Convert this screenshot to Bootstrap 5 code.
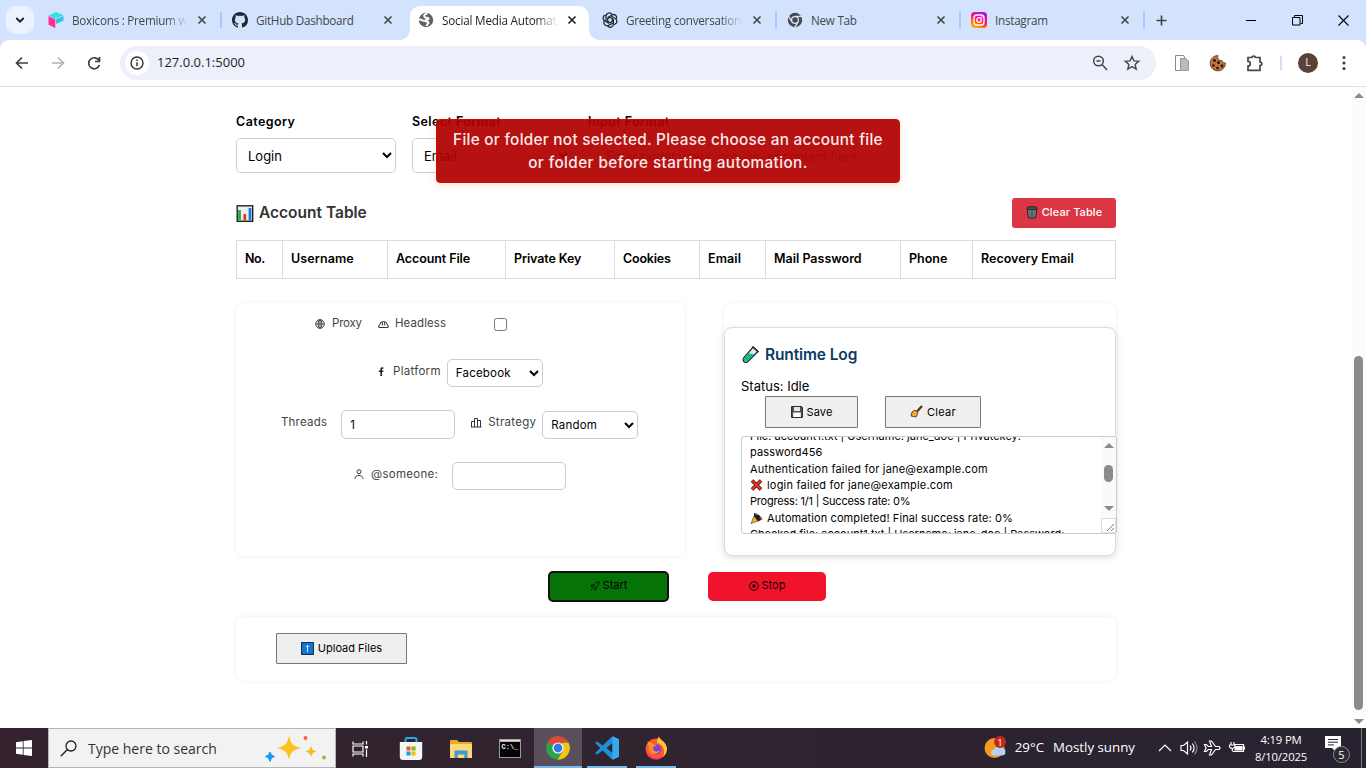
<!DOCTYPE html>
<html lang="en">
<head>
<meta charset="utf-8">
<title>Social Media Automation</title>
<link href="https://cdn.jsdelivr.net/npm/bootstrap@5.3.0/dist/css/bootstrap.min.css" rel="stylesheet">
<style>
html,body{height:768px;overflow:hidden}
body{width:1366px;font-family:Inter,"Liberation Sans",sans-serif;font-size:13px;line-height:1.5;color:#000;background:#fff}
svg{display:block;flex:none}
.ui{font-family:"Open Sans","Noto Sans",sans-serif}
/* letter spacing steps */
.ls-n2{letter-spacing:-.2px}.ls-n1{letter-spacing:-.1px}.ls-1{letter-spacing:.1px}.ls-2{letter-spacing:.2px}.ls-3{letter-spacing:.29px}.ls-4{letter-spacing:.4px}
/* tab strip */
.strip{height:40px;background:#d3e3fd;font-size:11.7px;letter-spacing:-.26px;color:#44474a}
.tabdrop{width:28px;height:28px;border-radius:10px;background:#ecf2fe;margin:0 4px 0 6px}
.btab{width:184px;height:40px;padding:0 13px 0 10px;border-right:2px solid transparent;position:relative}
.btab svg.fav{width:16px;height:16px;margin-right:8px}
.btab .ttl{width:118px;white-space:nowrap;padding-top:1px}
.btab .fade-end{-webkit-mask-image:linear-gradient(90deg,#000 80%,transparent 98%);mask-image:linear-gradient(90deg,#000 80%,transparent 98%)}
.btab .cls{margin-left:auto}
.sepbar{width:2px;height:16px;background:#a8c7fa;position:absolute;right:-2px;top:12px}
.btab.w185{width:185px}.btab.w186{width:186px}
.btab.on{color:#1f1f1f}
.btab.on::before{content:"";position:absolute;left:2px;top:6px;width:179px;height:34px;background:#fff;border-radius:10px 10px 0 0}
.btab.on>*{position:relative}
.btab.on .foot{position:absolute;bottom:0;width:10px;height:10px}
.foot.l{left:-8px;background:radial-gradient(circle at 0 0,transparent 9.5px,#fff 10px)}
.foot.r{left:181px;background:radial-gradient(circle at 100% 0,transparent 9.5px,#fff 10px)}
.newtab{margin-left:11px;margin-right:auto}
.wbtn{width:46px;height:40px}
/* toolbar */
.tbwrap{background:#d3e3fd;height:47px}
.tbar{height:47px;background:#fff;border-radius:9px 9px 0 0;border-bottom:1px solid #dfe1e5;padding-bottom:1px}
.omni{width:1036px;height:34px;border-radius:17px;background:#ecf0fa;padding:0 15px 0 5px;font-size:13px;color:#1f1f1f}
.site{width:24px;height:24px;border-radius:50%;background:#fff}
.av{width:20px;height:20px;border-radius:50%;background:#5d4037;color:#eee;font-size:11px;margin-left:2px}
.kebab{margin-right:18px}
/* page */
.pagebox{height:641px;width:1351px;padding:24px 235px 0 236px;position:relative}
.sbar{width:15px;height:641px;background:#fcfcfc;padding:6px 0 4px}
.sbar .thumb{width:9px;height:354px;border-radius:5px;background:#8b8b8b;margin-top:258px}
.flip{transform:scaleY(-1)}
.lab{font-weight:600;height:25px;padding-top:2px;margin-bottom:2px;white-space:nowrap;font-size:12.5px;letter-spacing:.42px}
.f160{width:160px;margin-right:16px}
.ctl{display:block;border:1px solid #ccc;border-radius:5px;background:#fff;color:#000;outline:0}
.ctl.big{width:160px;height:35px;font-size:13px;padding:0 4px 0 7px}
.ctl.sm2{width:96px;height:28px;font-size:11.5px;padding:0 0 0 4px;margin-left:6px;letter-spacing:.2px}
.ctl.inp{width:114px;height:29px;font-size:11.5px;padding:0 8px;margin-left:14px}
.ctl.inp.low{height:28px}
.ctl.tgt{width:282px;height:37px;font-size:12.5px;padding:0 8px;margin-left:9px}
.ctl.tgt::placeholder{color:#757575}
.toastbox{position:absolute;left:436px;top:32px;width:464px;height:64px;background:rgba(176,0,0,.93);border:1px solid #cf0808;border-radius:4px;color:#fbe9e9;text-align:center;font-size:15.3px;line-height:23px;padding-top:8px;font-weight:500;box-shadow:0 3px 10px rgba(255,150,60,.2);white-space:nowrap}
.acc-row{margin-top:23px}
.h-acc{font-size:15.5px;font-weight:600;color:#333}
.btn-clr{width:104px;height:30px;border-radius:3px;background:#dc3545;color:#fff;font-size:11px;font-weight:500;border:0;padding-bottom:2px}
.grid-t{table-layout:fixed;width:880px;border-collapse:collapse;margin:12px 0 0;font-size:12.5px}
.grid-t th{border:1px solid #ddd;height:38px;padding:0 0 0 8px;font-weight:600;white-space:nowrap}
.grid-t th:first-child{letter-spacing:-.4px}
.panels{margin-top:24px}
.panelx{border-radius:8px;background:#fff;box-shadow:0 0 5px rgba(0,0,0,.07)}
.opt{width:449px;height:253px;color:#444;font-size:11.5px}
.opt .lb{margin-bottom:3px;white-space:nowrap}
.r1{height:42px;padding-left:79px}.r1 .lb{margin-bottom:1px}
.r1 input{width:13px;height:13px;margin:1px 0 0 48px}
.r2{height:56px;padding-left:141px}
.r3{height:47px;padding-left:45px}
.r4{height:56px;padding-left:118px}
.g6{margin-left:6px}.g7{margin-left:7px}
.logwrap{width:392px;height:253px;padding-top:24px}
.logcard{height:229px;border:1px solid #ddd;border-radius:8px;padding:15px 0 0 16px;box-shadow:0 2px 8px rgba(0,0,0,.1);background:#fff}
.h-log{font-size:15.5px;font-weight:600;color:#0b3a66;letter-spacing:-.12px;gap:5px}
.stat{margin-top:11px;height:19px}
.logbtns{margin-left:24px;gap:27px}
.gbtn{border:1px solid #767676;background:#efefef;font-size:11px;border-radius:1px;color:#000;height:32px;width:93px;padding-bottom:2px}
.gbtn.w96{width:96px}.gbtn.w131{width:131px;height:31px}
.logarea{width:376px;height:98px;border:1px solid #ccc;border-radius:3px;margin-top:8px;overflow:hidden;background:#fff}
.logtxt{font-size:11px;line-height:16.4px;padding-left:8px;margin-top:-9.500px;width:359px;white-space:nowrap}
.logtxt svg{display:inline-block;vertical-align:-2px;margin-right:4px}
.lsb{width:15px;background:#fafafa;padding-top:6px}
.lsb .thumb{width:9px;height:17px;border-radius:4.5px;background:#8b8b8b;margin:17px 0 24px}
.lsb .grip{width:15px;height:15px;background:#fff;border:1px solid #ddd}
.runrow{margin:15px 0 15px 312px;height:31px;gap:39px}
.runb{font-size:11px;border:0;border-radius:5px;color:#000;padding-bottom:3px;gap:3px}
.runb.start{width:121px;height:31px;background:#067306;border:2px solid #101010}
.runb.stop{width:118px;height:29px;background:#f0132b;color:#1a0204}
.upl{height:64px;padding:16px 40px}
/* taskbar */
.task{height:40px;background:linear-gradient(90deg,#33222e,#30242f 45%,#282230);color:#fff}
.startb{width:48px}
.srch{width:288px;height:40px;background:#f2f2f2;border:1px solid #b5b5b5;color:#333;font-size:14px;padding:0 8px 0 11px}
.srch span{margin-left:11px;padding-top:1px}
.ticon{width:49px;height:40px;padding-top:1px}
.ticon.w51{width:51px}.ticon.w48{width:49px}
.ticon.act{width:48px;background:#594f5a;border-bottom:2px solid #76b9ed}
.ticon.run{width:40px;border-bottom:2px solid #76b9ed;margin-left:5px}
.ticon.run+.run{margin-left:9px}
.tray{font-size:13.3px}
.temp{margin-left:9px}.cond{margin-left:9px}
.trayic{margin-left:22px}
.clock{font-size:11.3px;line-height:17px;width:62px;text-align:center;white-space:nowrap;margin-left:5px;letter-spacing:-.15px}
.notif{width:25px;height:24px;position:relative;margin-left:13px}
.bdg{position:absolute;left:8px;top:10px;width:17px;height:17px;border-radius:50%;background:#2b2b2f;border:1px solid #8b8b8f;font-size:11px;line-height:15px;text-align:center}
.peek{width:1px;height:40px;background:#777;margin:0 4px 0 11px}
</style>
</head>
<body>
<svg width="0" height="0" class="position-absolute">
<defs>
<symbol id="x" viewBox="0 0 10 10"><path d="M1.5 1.5l7 7M8.5 1.5l-7 7" stroke="currentColor" stroke-width="1.6" fill="none"/></symbol>
<symbol id="up" viewBox="0 0 10 5"><path d="M0 5L5 0l5 5z" fill="#8b8b8b"/></symbol>
</defs></svg>

<div class="strip ui d-flex align-items-center">
  <div class="tabdrop d-flex align-items-center justify-content-center"><svg width="10" height="8" viewBox="0 0 10 8"><path d="M1.3 2l3.700 3.600L8.700 2" fill="none" stroke="#1f1f1f" stroke-width="1.900"/></svg></div>
  <div class="btab d-flex align-items-center"><svg class="fav" viewBox="0 0 16 16"><path d="M8 0l7.500 3.200L7.500 6.700.5 3.700z" fill="#2ee0ea"/><path d="M.5 4.300L7.300 7.200V16L.5 12.800z" fill="#ff2f92"/><path d="M8 7.200l7.500-3.200v4.500L8 12z" fill="#28c9dd"/></svg><div class="ttl fade-end">Boxicons : Premium w</div><svg class="cls" width="10" height="10"><use href="#x"/></svg><i class="sepbar"></i></div>
  <div class="btab w186 d-flex align-items-center"><svg class="fav" viewBox="0 0 16 16"><path fill="#24292f" d="M8 0C3.580 0 0 3.580 0 8c0 3.540 2.290 6.530 5.470 7.590.4.070.55-.17.55-.38 0-.19-.01-.82-.01-1.490-2.010.37-2.530-.49-2.690-.94-.09-.23-.48-.94-.82-1.130-.28-.15-.68-.52-.01-.53.630-.01 1.080.58 1.230.82.720 1.210 1.870.87 2.330.66.070-.52.28-.87.51-1.070-1.780-.2-3.640-.89-3.640-3.950 0-.87.31-1.590.82-2.150-.08-.2-.36-1.020.08-2.120 0 0 .67-.21 2.200.82.640-.18 1.320-.27 2-.27s1.360.090 2 .27c1.530-1.040 2.200-.82 2.200-.82.440 1.100.16 1.920.080 2.120.51.560.82 1.270.82 2.150 0 3.070-1.870 3.750-3.650 3.950.29.25.54.73.54 1.480 0 1.070-.01 1.930-.01 2.200 0 .21.15.46.55.38A8.010 8.010 0 0016 8c0-4.420-3.580-8-8-8z"/></svg><div class="ttl">GitHub Dashboard</div><svg class="cls" width="10" height="10"><use href="#x"/></svg></div>
  <div class="btab on d-flex align-items-center"><i class="foot l"></i><i class="foot r"></i><svg class="fav" viewBox="0 0 16 16"><circle cx="8" cy="8" r="7.200" fill="#5f6368"/><path d="M9.500 1.500C6.500 2 5.500 3.500 6.500 5s3.500 0 4 1.500-3.500 1-3.500 2.200 3 .3 3.500 1.800-1.700 1.500-2 3.500M1 7.500c2 0 4 .5 4.500 2" fill="none" stroke="#fff" stroke-width="1.900"/></svg><div class="ttl fade-end ls-n2">Social Media Automat</div><svg class="cls" width="10" height="10"><use href="#x"/></svg></div>
  <div class="btab w185 d-flex align-items-center"><svg class="fav" viewBox="0 0 16 16"><g fill="none" stroke="#222b33" stroke-width="1.300"><g id="pt"><path d="M4 9V4.200a3.300 3.300 0 016-1.800M5.500 5.500L10 3a3 3 0 014.300 3.800"/></g><use href="#pt" transform="rotate(120 8 8)"/><use href="#pt" transform="rotate(240 8 8)"/><path d="M8 5.300l2.300 1.400v2.700L8 10.700 5.700 9.400V6.700z"/></g></svg><div class="ttl fade-end">Greeting conversation</div><svg class="cls" width="10" height="10"><use href="#x"/></svg><i class="sepbar"></i></div>
  <div class="btab d-flex align-items-center"><svg class="fav" viewBox="0 0 16 16"><circle cx="8" cy="8" r="7.200" fill="#474b4f"/><circle cx="8" cy="8" r="3.400" fill="none" stroke="#d3e3fd" stroke-width="1.300"/><path d="M8 4.400h6.500M4.900 9.800L1.500 4M11.100 9.800l-3.300 5.600" stroke="#d3e3fd" stroke-width="1.300"/></svg><div class="ttl">New Tab</div><svg class="cls" width="10" height="10"><use href="#x"/></svg><i class="sepbar"></i></div>
  <div class="btab d-flex align-items-center"><svg class="fav" viewBox="0 0 16 16"><defs><linearGradient id="ig" x1="0.200" y1="1" x2="0.700" y2="0"><stop offset="0" stop-color="#ffc000"/><stop offset=".35" stop-color="#ff5a1f"/><stop offset=".6" stop-color="#ff0a8c"/><stop offset="1" stop-color="#b010f0"/></linearGradient></defs><rect width="16" height="16" rx="3.500" fill="url(#ig)"/><rect x="3" y="3" width="10" height="10" rx="3" fill="none" stroke="#fff" stroke-width="1.300"/><circle cx="8" cy="8" r="2.300" fill="none" stroke="#fff" stroke-width="1.300"/><circle cx="10.900" cy="5.100" r=".8" fill="#fff"/></svg><div class="ttl">Instagram</div><svg class="cls" width="10" height="10"><use href="#x"/></svg><i class="sepbar"></i></div>
  <svg width="11" height="11" viewBox="0 0 11 11" class="newtab"><path d="M5.500 .5v10M.5 5.500h10" stroke="#444" stroke-width="1.700"/></svg>
  <div class="wbtn d-flex align-items-center justify-content-center"><svg width="11" height="11"><path d="M0 5.500h10" stroke="#000"/></svg></div>
  <div class="wbtn d-flex align-items-center justify-content-center"><svg width="11" height="11"><path d="M.5 2.500h7.500v7.500h-7.500zM2.500 2.500v-2h8v8h-2" fill="none" stroke="#000"/></svg></div>
  <div class="wbtn d-flex align-items-center justify-content-center"><svg width="11" height="11"><path d="M.5.5l10 10M10.500.5l-10 10" stroke="#000" stroke-width="1.100"/></svg></div>
</div>

<div class="tbwrap ui"><div class="tbar d-flex align-items-center">
  <svg width="120" height="46" viewBox="0 40 120 46" fill="none" stroke-width="1.700"><path d="M28 63H17M22 57.500L16.500 63l5.500 5.500" stroke="#3c4043"/><path d="M52 63h11M58 57.500l5.500 5.500-5.500 5.500" stroke="#b0b3b6"/><path d="M99.200 61a5.500 5.500 0 10.200 4M99.500 57v4.500H95" stroke="#3c4043"/></svg>
  <div class="omni d-flex align-items-center">
    <div class="site d-flex align-items-center justify-content-center"><svg width="14" height="14" viewBox="0 0 14 14"><circle cx="7" cy="7" r="6" fill="none" stroke="#333" stroke-width="1.400"/><path d="M7 6.200v4M7 3.600v1.400" stroke="#333" stroke-width="1.500"/></svg></div>
    <span class="ms-2">127.0.0.1:5000</span>
    <svg class="ms-auto" width="50" height="18" viewBox="0 0 50 18" fill="none" stroke="#444746" stroke-width="1.500"><circle cx="7.500" cy="7" r="4.800"/><path d="M11 10.500l5 5.500M5.500 7h4"/><path d="M41 2.500l1.900 4.400 4.800.4-3.600 3.200 1.100 4.600-4.200-2.500-4.200 2.500 1.100-4.600-3.600-3.200 4.800-.4z" stroke-width="1.400"/></svg>
  </div>
  <svg width="140" height="46" viewBox="1156 40 140 46"><path d="M1175.500 55.500v15h5V59h5l-2-3.500z" fill="#fff" stroke="#888"/><path d="M1180.500 58.500h5.500l2.500 2.500v9.500h-8z" fill="#bbb" stroke="#999"/><path d="M1218 55.500a7.700 7.700 0 107.500 7.500 3 3 0 01-3.500-2.500 3.500 3.500 0 01-4-5z" fill="#bf7248" stroke="#5e2f18" stroke-width=".8"/><g fill="#2b1108"><circle cx="1214.500" cy="60.500" r="1.400"/><circle cx="1218.500" cy="62.500" r="1.500"/><circle cx="1213.500" cy="65.500" r="1.300"/><circle cx="1222" cy="66" r="1.400"/><circle cx="1217.500" cy="68" r="1.300"/></g><path d="M1248 57.500h3.800a1.900 1.900 0 013.700 0h4.500v4.500a1.800 1.800 0 010 3.600v4.700h-12v-4.300a2.300 2.300 0 000-4.600z" fill="none" stroke="#444746" stroke-width="1.700"/><path d="M1281 55.500v15" stroke="#c5d8fb" stroke-width="1.600"/></svg>
  <div class="av d-flex align-items-center justify-content-center me-auto">L</div>
  <svg width="6" height="16" class="kebab" fill="#444746"><circle cx="2" cy="2.500" r="1.600"/><circle cx="2" cy="8" r="1.600"/><circle cx="2" cy="13.500" r="1.600"/></svg>
</div></div>

<div class="d-flex">
<main class="pagebox">
  <div class="d-flex">
    <div class="f160"><div class="lab">Category</div><select class="ctl big"><option>Login</option></select></div>
    <div class="f160"><div class="lab">Select Format</div><select class="ctl big"><option>Email</option></select></div>
    <div><div class="lab">Input Format</div><input class="ctl tgt" placeholder="Enter target users, groups, or content here"></div>
  </div>
  <div class="acc-row d-flex align-items-center justify-content-between">
    <div class="h-acc d-flex align-items-center"><svg class="me-1" width="19" height="17" viewBox="0 0 19 17"><rect x="1.200" y=".8" width="15.500" height="15.500" fill="#eee" stroke="#222" stroke-width="1.400"/><path d="M3.500 5v10.500" stroke="#20b040" stroke-width="2.800"/><path d="M8.800 9v6.500" stroke="#e03a2a" stroke-width="2.800"/><path d="M14 3v12.500" stroke="#1678d8" stroke-width="2.800"/></svg><span>Account Table</span></div>
    <button class="btn-clr d-flex align-items-center justify-content-center"><svg class="me-1" width="12" height="13" viewBox="0 0 12 13"><path d="M1 2.500h10L9.500 12h-7z" fill="#6f7f80" stroke="#222"/><ellipse cx="6" cy="2.200" rx="5" ry="1.600" fill="#4a5556" stroke="#222"/><path d="M3 5l5.500 6M9 5l-5.500 6M6 4v8" stroke="#445" stroke-width=".7"/></svg><span class="ls-1">Clear Table</span></button>
  </div>
  <table class="grid-t"><colgroup><col width="46"><col width="105"><col width="118"><col width="109"><col width="85"><col width="66"><col width="135"><col width="72"><col></colgroup><tr><th>No.</th><th class="ls-1">Username</th><th class="ls-n1">Account File</th><th class="ls-n1">Private Key</th><th class="ls-n2">Cookies</th><th class="ls-1">Email</th><th>Mail Password</th><th>Phone</th><th>Recovery Email</th></tr></table>
  <div class="panels d-flex justify-content-between">
    <section class="panelx opt">
      <div class="r1 d-flex align-items-center">
        <svg width="10" height="10" viewBox="0 0 10 10"><path d="M1 3.500A4.300 4.300 0 019 3.500" fill="#cfe0f0"/><g fill="none" stroke="#333" stroke-width=".9"><circle cx="5" cy="5" r="4.300"/><ellipse cx="5" cy="5" rx="1.900" ry="4.300"/><path d="M.7 5h8.600M5 .7v8.600"/></g></svg><span class="lb g7 ls-n2">Proxy</span>
        <svg width="11" height="10" viewBox="0 0 11 10" class="ms-3"><path d="M.8 8.500h9.400V6.500h-.7a4 4 0 00-8 0H.8zM4.300 6.500V3M6.700 6.500V3" fill="none" stroke="#333"/></svg><span class="lb g6 ls-1">Headless</span>
        <input type="checkbox">
      </div>
      <div class="r2 d-flex align-items-center">
        <svg width="8" height="9" viewBox="0 0 8 9" class="mb-1"><path d="M3.400 9V5H1.800V3.500h1.600V2.300C3.400.8 4.300.2 6.400.4v1.300C5.400 1.600 5 1.800 5 2.500v1h1.500L6.200 5H5v4z" fill="#222"/></svg><span class="lb ms-2 ls-3">Platform</span>
        <select class="ctl sm2"><option>Facebook</option></select>
      </div>
      <div class="r3 d-flex align-items-center">
        <span class="lb ls-2">Threads</span><input class="ctl inp" value="1">
        <svg width="11" height="11" viewBox="0 0 11 11" class="mb-1 ms-3"><path d="M.5 10V4.500h3V10M3.500 10V1.500h3V10M6.500 10V3.500h3V10M0 10h10.500" fill="none" stroke="#333"/></svg><span class="lb g6 ls-3">Strategy</span>
        <select class="ctl sm2"><option>Random</option></select>
      </div>
      <div class="r4 d-flex align-items-center">
        <svg width="10" height="10" viewBox="0 0 10 10" class="mb-1"><circle cx="5" cy="2.700" r="2" fill="none" stroke="#333"/><path d="M1 9.800c0-4.500 8-4.500 8 0" fill="none" stroke="#333"/></svg><span class="lb g7 ls-3">@someone:</span><input class="ctl inp low">
      </div>
    </section>
    <section class="panelx logwrap"><div class="logcard">
      <div class="h-log d-flex align-items-center"><svg width="19" height="19" viewBox="0 0 19 19"><path d="M12 2l5 4.500L6.500 17c-3 1.500-5.500-1.500-4-4z" fill="#cfe8f5" stroke="#222" stroke-width="1.200"/><path d="M7 8.200l6 1L6.200 16.300c-2 1-4-1-3-3z" fill="#12b886"/><path d="M11.500 1.500l6 5.500" stroke="#222" stroke-width="1.500"/></svg><span>Runtime Log</span></div>
      <div class="stat">Status: Idle</div>
      <div class="logbtns d-flex">
        <button class="gbtn d-flex align-items-center justify-content-center"><svg class="me-1" width="12" height="12" viewBox="0 0 12 12"><path d="M.6.600h10l.8.8v10H.6z" fill="#5a4a58" stroke="#222"/><rect x="3" y="1" width="6" height="4" fill="#e6e6e6"/><rect x="2.200" y="6.500" width="7.600" height="4.500" fill="#fff"/></svg><span class="ls-1">Save</span></button>
        <button class="gbtn w96 d-flex align-items-center justify-content-center"><svg class="me-1" width="13" height="13" viewBox="0 0 13 13"><path d="M12 1L7 6.500" stroke="#5a2f18" stroke-width="2.200"/><path d="M5 5l3 3-2 4-5-1 1-4z" fill="#f4a838" stroke="#4a2a10" stroke-width=".8"/></svg><span class="ls-3">Clear</span></button>
      </div>
      <div class="logarea d-flex">
        <div class="logtxt"><div>File: account1.txt | Username: jane_doe | Privatekey:</div><div class="ls-1">password456</div><div class="ls-2">Authentication failed for jane@example.com</div><div><svg width="13" height="12" viewBox="0 0 13 12"><path d="M2 1.500l9 9M11 1.500l-9 9" stroke="#3a1010" stroke-width="3.600"/><path d="M2 1.500l9 9M11 1.500l-9 9" stroke="#e5341f" stroke-width="2.200"/></svg><span class="ls-2">login failed for jane@example.com</span></div><div class="ls-n2">Progress: 1/1 | Success rate: 0%</div><div><svg width="13" height="12" viewBox="0 0 13 12"><path d="M4 1l5 2 3.500 4-4 2.500L4 6z" fill="#222"/><path d="M4 4l4 5-7 2.500z" fill="#f4b52e" stroke="#4a2a10" stroke-width=".6"/><circle cx="6" cy="2" r="1" fill="#2b8be0"/><circle cx="10.500" cy="6.500" r="1" fill="#d33"/></svg><span class="ls-1">Automation completed! Final success rate: 0%</span></div><div>Checked file: account1.txt | Username: jane_doe | Password:</div></div>
        <div class="lsb d-flex flex-column align-items-center"><svg width="10" height="5"><use href="#up"/></svg><div class="thumb"></div><svg class="flip" width="10" height="5"><use href="#up"/></svg><div class="grip mt-auto"><svg width="13" height="13"><path d="M5 12l7-7M9 12l3-3" stroke="#777"/></svg></div></div>
      </div>
    </div></section>
  </div>
  <div class="runrow d-flex align-items-center">
    <button class="runb start d-flex align-items-center justify-content-center"><svg width="10" height="10" viewBox="0 0 10 10"><path d="M3.500 6.500C3 4 6 .7 9.300.7 9.300 4 6 7 3.500 6.500zM4 3.500L1 4.500l1 2M6.500 6L5.500 9l-2-1M2.500 7.500L.8 9.200" fill="none" stroke="#021a02"/></svg><span>Start</span></button>
    <button class="runb stop d-flex align-items-center justify-content-center"><svg width="10" height="10" viewBox="0 0 10 10"><circle cx="5" cy="5" r="4.300" fill="none" stroke="#1a0204"/><rect x="3.500" y="3.500" width="3" height="3" fill="#1a0204"/></svg><span>Stop</span></button>
  </div>
  <div class="panelx upl"><button class="gbtn w131 d-flex align-items-center justify-content-center"><svg class="me-1" width="13" height="13" viewBox="0 0 13 13"><rect x=".6" y=".6" width="11.800" height="11.800" fill="#0d7ad8" stroke="#123"/><path d="M6.500 10V3.500M4.800 5l1.700-1.700L8.200 5" fill="none" stroke="#d8ecff"/></svg><span>Upload Files</span></button></div>
  <div class="toastbox"><span class="ls-3">File or folder not selected. Please choose an account file</span><br><span class="ls-4">or folder before starting automation.</span></div>
</main>
<div class="sbar d-flex flex-column align-items-center"><svg width="10" height="5"><use href="#up"/></svg><div class="thumb"></div><svg class="mt-auto flip" width="10" height="5"><use href="#up"/></svg></div>
</div>

<footer class="task ui d-flex">
  <div class="startb d-flex align-items-center justify-content-center"><svg width="16" height="16" viewBox="0 0 16 16" fill="#fff"><path d="M0 2.200L6.800 1.200V7.600H0zM7.600 1.100L16 0v7.600H7.600zM0 8.400h6.800v6.400L0 13.800zM7.600 8.400H16V16l-8.400-1.100z"/></svg></div>
  <div class="srch d-flex align-items-center"><svg width="17" height="17" viewBox="0 0 17 17"><circle cx="11" cy="6" r="5" fill="none" stroke="#222" stroke-width="1.300"/><path d="M7.400 9.600L.8 16.200" stroke="#222" stroke-width="1.400"/></svg><span>Type here to search</span>
    <svg class="ms-auto" width="62" height="28" viewBox="264 734 62 28"><path d="M288 735.500c2 9 4 10.500 12 12.500-8 2-10 3.500-12 11.500-2-8-4-9.500-12-11.500 8-2 10-3.500 12-12.500z" fill="#fbc11e"/><path d="M310 745.500c1 4 2 5 5.500 6-3.500 1-4.500 2-5.500 5.500-1-3.500-2-4.500-5.500-5.500 3.500-1 4.500-2 5.500-6z" fill="#fbb81e"/><path d="M269 752l1.500 3 3 1.500-3 1.500-1.500 3.500-1.500-3.500-3-1.500 3-1.500z" fill="#12a0ec" stroke="#12a0ec"/><circle cx="304.500" cy="738" r="2" fill="#f4682c"/><circle cx="323" cy="757.500" r="2" fill="#86c440"/></svg></div>
  <div class="ticon d-flex align-items-center justify-content-center"><svg width="17" height="16" viewBox="0 0 17 16" fill="none" stroke="#fff" stroke-width="1.200"><path d="M1 .5V3h10V.5M1 15.500V13h10v2.500M1 5h10v6H1zM14.500 0v3.500M14.500 8.500V16"/><path d="M13 5h3v2.500h-3z" fill="#fff" stroke="none"/></svg></div>
  <div class="ticon w51 d-flex align-items-center justify-content-center"><svg width="24" height="24" viewBox="0 0 24 24"><path d="M6.500 6V2.500a1.500 1.500 0 011.500-1.500h8a1.500 1.500 0 011.500 1.500V6" fill="none" stroke="#28a8ea" stroke-width="2"/><path d="M.8 5h22.400v15a3 3 0 01-3 3H3.800a3 3 0 01-3-3z" fill="#f5f5f5"/><path d="M7.500 9.500h4v4h-4z" fill="#f25022"/><path d="M12.500 9.500h4v4h-4z" fill="#7fba00"/><path d="M7.500 14.500h4v4h-4z" fill="#00a4ef"/><path d="M12.500 14.500h4v4h-4z" fill="#ffb900"/></svg></div>
  <div class="ticon w48 d-flex align-items-center justify-content-center"><svg width="22" height="18" viewBox="0 0 22 18"><path d="M0 1a1 1 0 011-1h6l2 2h12a1 1 0 011 1v4H0z" fill="#e8a92c"/><path d="M0 4h22v14H0z" fill="#fcd978"/><path d="M4.500 18v-6.500a1 1 0 011-1h11a1 1 0 011 1V18h-3.200v-3.500H7.700V18z" fill="#3f97dc"/></svg></div>
  <div class="ticon d-flex align-items-center justify-content-center"><svg width="22" height="19" viewBox="0 0 22 19"><rect x=".5" y=".5" width="21" height="18" fill="#050505" stroke="#999"/><path d="M1 1.800h20" stroke="#ddd" stroke-width="2"/><text x="2.500" y="9.500" font-family="Liberation Mono" font-size="7" font-weight="700" fill="#eee">C:\_</text></svg></div>
  <div class="ticon act d-flex align-items-center justify-content-center"><svg width="24" height="24" viewBox="0 0 24 24"><circle cx="12" cy="12" r="11.800" fill="#2ba24c"/><path d="M1.800 6A11.800 11.800 0 0122.200 6L12 7v5z" fill="#ea4335"/><path d="M22.300 6.300A11.800 11.800 0 0111.700 23.800L17 14.500l-1-7.700h6.300z" fill="#fbc116"/><circle cx="12" cy="12" r="5.600" fill="#fff"/><circle cx="12" cy="12" r="4.400" fill="#3477e8"/></svg></div>
  <div class="ticon run d-flex align-items-center justify-content-center"><svg width="24" height="24" viewBox="0 0 24 24"><path d="M17.500.3L24 3.200v17.600L17.500 23.800 7.500 14.500 2.300 18.500 0 17.200 5.300 12 0 6.800 2.300 5.500l5.200 4zM17.500 7L11.500 12l6 5z" fill="#1f8fd8" fill-rule="evenodd"/><path d="M17.500.3L24 3.200v17.600l-6.500 3z" fill="#35aaf0"/></svg></div>
  <div class="ticon run d-flex align-items-center justify-content-center"><svg width="24" height="24" viewBox="0 0 24 24"><circle cx="12" cy="13" r="10.500" fill="#ff5a2c"/><path d="M15 .5c0 3 7.500 5 8 12a11 11 0 01-4 8.500C22 14 19 8 13 7c0-3 .5-5 2-6.500z" fill="#ffc53a"/><path d="M3 4c0 2 2 3 4 2.500L9 9l-4 2z" fill="#ffa32e"/><circle cx="12" cy="13.500" r="5.200" fill="#7a3fe0"/><path d="M5 9c3-2 6-.5 8 1-3 0-4 1-4 3 1 3 5 3 7 1-1 5-9 6-11 0z" fill="#ff8a2a"/><path d="M1.600 13a10.500 10.500 0 0018 7.200C13 24 4 22 1.600 13z" fill="#f5267a"/></svg></div>
  <div class="tray d-flex align-items-center ms-auto">
    <svg width="24" height="24" viewBox="983 736 24 24"><circle cx="995.500" cy="748" r="10" fill="#f79a1e"/><path d="M995 755.500a3 3 0 010-6 4.500 4.500 0 018-1.500 3.800 3.800 0 01.5 7.500z" fill="#b4d2f8"/><circle cx="1001" cy="742" r="6" fill="#c4281c"/><text x="1001" y="745.500" text-anchor="middle" font-size="9.500" fill="#fff">1</text></svg>
    <span class="temp">29°C</span><span class="cond">Mostly sunny</span>
    <svg class="trayic" width="88" height="24" viewBox="1157 736 88 24" fill="none" stroke="#fff" stroke-width="1.200"><path d="M1159 751l6-6 6 6"/><path d="M1181 745.500h2.500l4-3.500v12l-4-3.500h-2.500zM1190 745.500q2 2.500 0 5M1192.300 743.500q3.500 4.500 0 9"/><path d="M1194.500 741.500q5 6.500 0 13" stroke="#887"/><path d="M1206 748l-1.500-3.500h1.800l2 2h3.200l-2-5.500h2l4 5.500h3.500q2 1.500 0 3h-3.500l-4 5.500h-2l2-5.500h-3.200l-2 2h-1.800z"/><path d="M1234 744.500h9.500v7h-11M1244.500 746.500v3M1231 742v3M1234 742v3M1229.500 745h5.500v2q-2.700 3-5.500 0zM1232.300 749v2"/><path d="M1236 746.500h6v3.500h-7z" fill="#fff"/></svg>
    <div class="clock">4:19 PM<br>8/10/2025</div>
    <div class="notif"><svg width="17" height="17" viewBox="0 0 17 17"><path d="M0 0h16v12h-5v4l-4-4H0z" fill="#fff"/><path d="M3 3.500h10M3 6.200h10M3 8.900h6" stroke="#2a2230"/></svg><span class="bdg">5</span></div>
    <i class="peek"></i>
  </div>
</footer>
<script src="https://cdn.jsdelivr.net/npm/bootstrap@5.3.0/dist/js/bootstrap.bundle.min.js"></script>
</body>
</html>
